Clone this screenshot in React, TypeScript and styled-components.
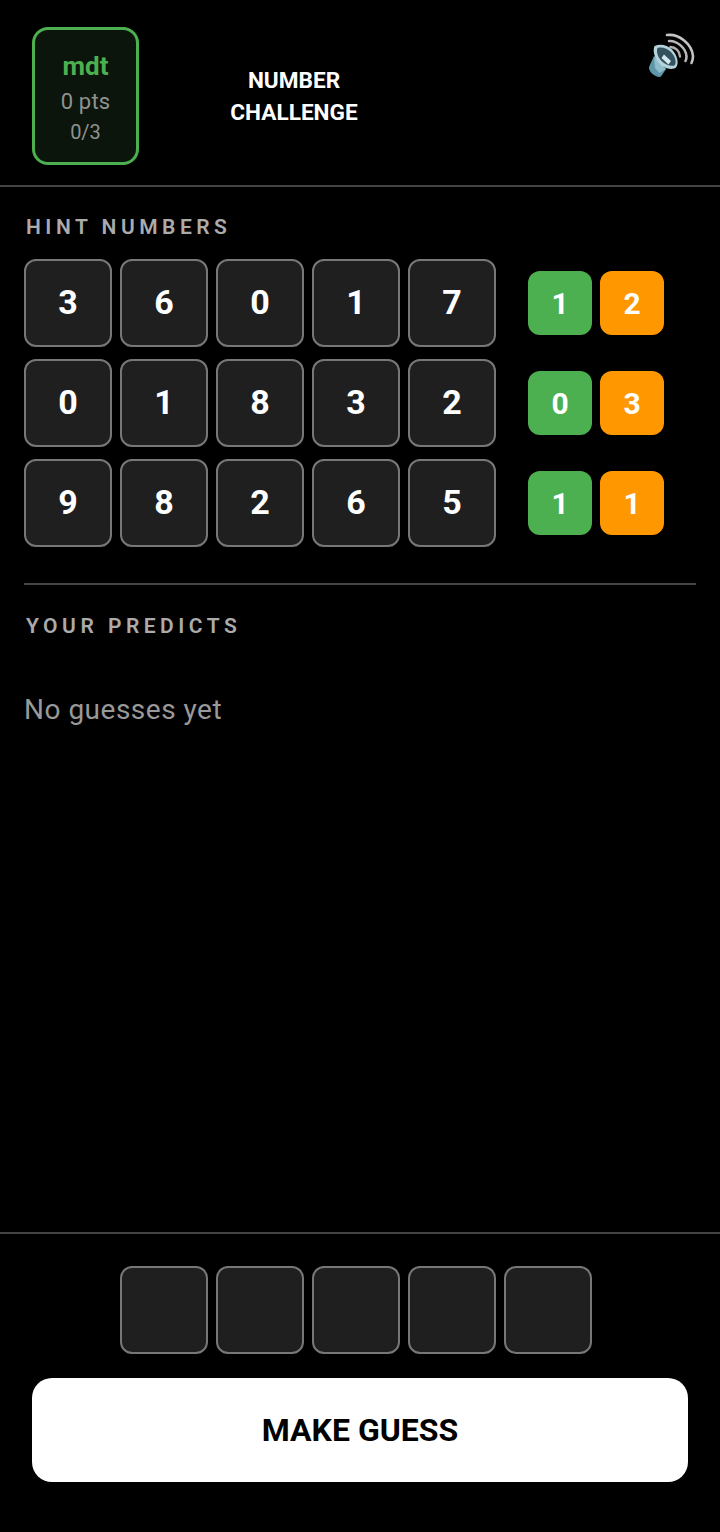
import React from 'react'
import styled, { createGlobalStyle } from 'styled-components'

const GlobalStyle = createGlobalStyle`
    html, body {
        margin: 0;
        padding: 0;
        background: #000;
    }
    body {
        font-family: Roboto, "Liberation Sans", sans-serif;
    }
`

const hints = [
    { digits: [3, 6, 0, 1, 7], correct: 1, misplaced: 2 },
    { digits: [0, 1, 8, 3, 2], correct: 0, misplaced: 3 },
    { digits: [9, 8, 2, 6, 5], correct: 1, misplaced: 1 },
]

const SpeakerIcon = () => (
    <svg width="48" height="48" viewBox="0 0 48 48" fill="none">
        <path d="M20 4C32 2.500 45 13 46 25C46 28 45.500 30 44.500 32" stroke="#c4c4c4" strokeWidth="2.600" strokeLinecap="round" />
        <path d="M22 10C30 9.500 39 17 39.500 25.500C39.500 27.500 39 29 38.500 30" stroke="#b8b8b8" strokeWidth="2.600" strokeLinecap="round" />
        <path d="M23.500 16C28.500 16 33 20.500 33 25.500" stroke="#aeaeae" strokeWidth="2.400" strokeLinecap="round" />
        <path d="M7 25L13 32L19 38L14 45.500C12 46.500 9 45.500 5.500 43C3 40.500 1.500 38 2 36Z" fill="#5f97a8" />
        <path d="M7 25L13 32L19 38L12.500 42L8 37Z" fill="#8dbdca" />
        <path d="M7.500 15C13 12.500 20 13.500 25 18.500C30 24 32.500 32 29 36.500C26 39 20 38 15 35C10 31 4.500 22 7.500 15Z" fill="#b4d3db" />
        <path d="M10.500 17C15 15.500 20.500 17.500 24 21C28 25.500 30 31 27.500 34.500C23.500 35.500 18 33.500 14.500 30C11 26.500 9 21 10.500 17Z" fill="#33515f" />
        <path d="M17 23.500L24 30L21.500 33.500L14.500 27Z" fill="#d5e8ed" />
    </svg>
)

export const App = () => {
    return (
        <Page>
            <GlobalStyle />
            <Header>
                <PlayerCard>
                    <PlayerName>mdt</PlayerName>
                    <PlayerStat>0 pts</PlayerStat>
                    <PlayerRound>0/3</PlayerRound>
                </PlayerCard>
                <Title>NUMBER<br />CHALLENGE</Title>
                <SoundButton><SpeakerIcon /></SoundButton>
            </Header>

            <Content>
                <SectionLabel>HINT NUMBERS</SectionLabel>
                <HintList>
                    {hints.map((hint) => (
                        <HintRow key={hint.digits.join('')}>
                            <Cells>
                                {hint.digits.map((digit, i) => (
                                    <Cell key={i}>{digit}</Cell>
                                ))}
                            </Cells>
                            <Badges>
                                <Badge $color="#4caf50">{hint.correct}</Badge>
                                <Badge $color="#ff9800">{hint.misplaced}</Badge>
                            </Badges>
                        </HintRow>
                    ))}
                </HintList>
                <Divider />
                <PredictLabel>YOUR PREDICTS</PredictLabel>
                <EmptyText>No guesses yet</EmptyText>
            </Content>

            <Footer>
                <InputCells>
                    {[0, 1, 2, 3, 4].map((i) => (
                        <Cell key={i} />
                    ))}
                </InputCells>
                <GuessButton>MAKE GUESS</GuessButton>
            </Footer>
        </Page>
    )
}

const Page = styled.div`
    width: 720px;
    height: 1532px;
    display: flex;
    flex-direction: column;
    background: #000;
    overflow: hidden;
`

const Header = styled.header`
    height: 185px;
    flex-shrink: 0;
    display: flex;
    align-items: flex-start;
    padding: 0 25px 0 32px;
    border-bottom: 2px solid #444;
`

const PlayerCard = styled.div`
    width: 107px;
    height: 138px;
    box-sizing: border-box;
    margin-top: 27px;
    display: flex;
    flex-direction: column;
    align-items: center;
    padding-top: 21px;
    background: #0c150c;
    border: 3px solid #4caf50;
    border-radius: 16px;
`

const PlayerName = styled.div`
    font-size: 26px;
    line-height: 30px;
    font-weight: 700;
    color: #4caf50;
`

const PlayerStat = styled.div`
    margin-top: 6px;
    font-size: 22px;
    line-height: 30px;
    letter-spacing: 0.2px;
    color: #8f938f;
`

const PlayerRound = styled.div`
    font-size: 20px;
    line-height: 30px;
    color: #8f938f;
`

const Title = styled.h1`
    width: 180px;
    margin: 65px 0 0 65px;
    font-size: 22.600px;
    line-height: 32px;
    font-weight: 700;
    text-align: center;
    color: #fff;
`

const SoundButton = styled.div`
    margin: 31px 0 0 auto;
    width: 48px;
    height: 48px;
`

const Content = styled.main`
    flex: 1;
    padding: 0 24px;
`

const SectionLabel = styled.div`
    margin: 27px 0 0 2px;
    font-size: 21px;
    line-height: 26px;
    font-weight: 600;
    letter-spacing: 4.500px;
    color: #ababab;
`

const HintList = styled.div`
    margin-top: 19px;
    display: flex;
    flex-direction: column;
    gap: 12px;
`

const HintRow = styled.div`
    display: flex;
    align-items: center;
    gap: 32px;
`

const Cells = styled.div`
    display: flex;
    gap: 8px;
`

const Cell = styled.div`
    width: 88px;
    height: 88px;
    box-sizing: border-box;
    display: flex;
    align-items: center;
    justify-content: center;
    padding-bottom: 2px;
    background: #1f1f1f;
    border: 2px solid #777;
    border-radius: 12px;
    font-size: 34px;
    font-weight: 700;
    color: #fff;
`

const Badges = styled.div`
    display: flex;
    gap: 8px;
`

const Badge = styled.div<{ $color: string }>`
    width: 64px;
    height: 64px;
    display: flex;
    align-items: center;
    justify-content: center;
    background: ${(p) => p.$color};
    border-radius: 12px;
    font-size: 30px;
    font-weight: 700;
    color: #fff;
`

const Divider = styled.div`
    height: 2px;
    margin-top: 36px;
    background: #444;
`

const PredictLabel = styled(SectionLabel)`
    margin-top: 28px;
`

const EmptyText = styled.div`
    margin: 54px 0 0 0;
    font-size: 28px;
    line-height: 34px;
    letter-spacing: 0.500px;
    color: #999;
`

const Footer = styled.footer`
    flex-shrink: 0;
    height: 300px;
    box-sizing: border-box;
    border-top: 2px solid #444;
    display: flex;
    flex-direction: column;
    align-items: center;
    padding-top: 32px;
`

const InputCells = styled.div`
    display: flex;
    gap: 8px;
    margin-right: 8px;
`

const GuessButton = styled.button`
    width: 656px;
    height: 104px;
    margin-top: 24px;
    border: none;
    border-radius: 20px;
    background: #fff;
    font-family: inherit;
    font-size: 32px;
    font-weight: 700;
    color: #000;
`

export default App
